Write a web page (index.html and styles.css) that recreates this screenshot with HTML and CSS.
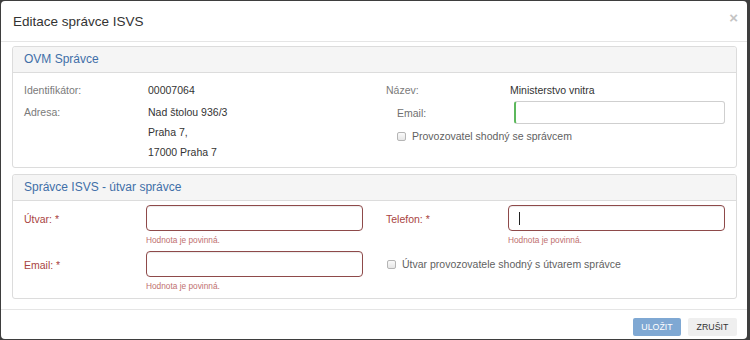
FILE: index.html
```html
<!DOCTYPE html>
<html lang="cs">
<head>
<meta charset="utf-8">
<title>Editace správce ISVS</title>
<link rel="stylesheet" href="styles.css">
</head>
<body>
<div class="modal">
  <div class="modal-header">
    <h4 class="modal-title">Editace správce ISVS</h4>
    <button class="close" type="button">×</button>
  </div>
  <div class="modal-body">
    <div class="panel">
      <div class="panel-heading">OVM Správce</div>
      <div class="panel-body ovm">
        <div class="col">
          <div class="drow"><span class="lbl">Identifikátor:</span><span class="val">00007064</span></div>
          <div class="drow"><span class="lbl">Adresa:</span><div class="val">Nad štolou 936/3<br>Praha 7,<br>17000 Praha 7</div></div>
        </div>
        <div class="col">
          <div class="drow"><span class="lbl">Název:</span><span class="val">Ministerstvo vnitra</span></div>
          <div class="erow"><span class="lbl2">Email:</span><input class="input focus" type="text"></div>
          <label class="check indent"><span class="cb"></span>Provozovatel shodný se správcem</label>
        </div>
      </div>
    </div>
    <div class="panel">
      <div class="panel-heading">Správce ISVS - útvar správce</div>
      <div class="panel-body utvar">
        <div class="col">
          <div class="frow">
            <span class="flbl">Útvar: *</span>
            <div class="fctl"><input class="input err" type="text"><div class="help">Hodnota je povinná.</div></div>
          </div>
          <div class="frow">
            <span class="flbl">Email: *</span>
            <div class="fctl"><input class="input err" type="text"><div class="help">Hodnota je povinná.</div></div>
          </div>
        </div>
        <div class="col">
          <div class="frow">
            <span class="flbl">Telefon: *</span>
            <div class="fctl"><div class="input err caretbox"><span class="caret"></span></div><div class="help">Hodnota je povinná.</div></div>
          </div>
          <label class="check chk2"><span class="cb"></span>Útvar provozovatele shodný s útvarem správce</label>
        </div>
      </div>
    </div>
  </div>
  <div class="modal-footer">
    <button class="btn btn-primary" type="button">ULOŽIT</button>
    <button class="btn btn-default" type="button">ZRUŠIT</button>
  </div>
</div>
</body>
</html>
```

FILE: styles.css
```css
* { box-sizing: border-box; }
html, body { margin: 0; padding: 0; }
body {
  background: #3e3e3e;
  width: 750px;
  height: 340px;
  overflow: hidden;
  padding: 1px 3px 0 1px;
  font-family: "Liberation Sans", Arial, sans-serif;
  font-size: 10.5px;
  color: #333;
}
.modal {
  width: 746px;
  height: 338px;
  background: #fff;
  border-radius: 4px;
  display: flex;
  flex-direction: column;
}
.modal-header {
  position: relative;
  height: 41px;
  padding: 11px 12px;
  border-bottom: 1px solid #e5e5e5;
}
.modal-title {
  margin: 0;
  font-size: 13.5px;
  line-height: 19px;
  font-weight: normal;
  color: #333;
}
.close {
  position: absolute;
  right: 9px;
  top: 9px;
  border: 0;
  background: none;
  padding: 0;
  font-family: "Liberation Sans", Arial, sans-serif;
  font-size: 15px;
  font-weight: bold;
  line-height: 16px;
  color: #c4c4c4;
}
.modal-body {
  padding: 4px 10px 0 11px;
  flex: 1;
  display: flex;
  flex-direction: column;
  gap: 6px;
}
.panel {
  border: 1px solid #dcdcdc;
  border-radius: 3px;
  background: #fff;
}
.panel-heading {
  background: #f5f5f5;
  border-bottom: 1px solid #dcdcdc;
  border-radius: 3px 3px 0 0;
  height: 26px;
  padding: 0 11px;
  line-height: 25px;
  font-size: 12px;
  color: #3f6fa8;
}
.panel-body {
  display: grid;
  grid-template-columns: 1fr 1fr;
  column-gap: 23px;
  padding: 0 11px;
}
.ovm { height: 94px; padding-top: 7px; }
.utvar { height: 97px; padding-top: 4px; }
.drow {
  display: grid;
  grid-template-columns: 124px 1fr;
  line-height: 20px;
  margin-bottom: 2px;
}
.lbl { color: #7a7a7a; }
.val { color: #333; }
.erow {
  display: grid;
  grid-template-columns: 117px 1fr;
  align-items: center;
  padding-left: 11px;
  margin-top: -1px;
}
.lbl2 { color: #6f6f6f; }
.input {
  display: block;
  width: 100%;
  height: 26px;
  border: 1px solid #cfcfcf;
  border-radius: 3px;
  background: #fff;
  margin: 0;
  padding: 0 8px;
  font: inherit;
  outline: none;
}
.input.focus {
  height: 23px;
  border-left: 2px solid #5cb85c;
}
.input.err {
  border: 1.5px solid #8e4a4a;
  border-radius: 4px;
  box-shadow: inset 0 1px 1px rgba(0,0,0,.08);
}
.caretbox { position: relative; }
.caret {
  position: absolute;
  left: 10px;
  top: 6px;
  width: 1px;
  height: 13px;
  background: #222;
}
.check {
  display: flex;
  align-items: center;
  line-height: 20px;
  color: #616161;
}
.check.indent { padding-left: 11px; margin-top: 2px; }
.cb {
  width: 9px;
  height: 9px;
  border: 1px solid #b5b5b5;
  border-radius: 2px;
  background: linear-gradient(#fafafa, #e6e6e6);
  margin-right: 6px;
  flex: none;
}
.chk2 { margin-top: 8px; padding-left: 1px; }
.frow {
  display: grid;
  grid-template-columns: 122px 1fr;
  margin-bottom: 5px;
}
.flbl {
  color: #a94442;
  padding-top: 7px;
  line-height: 14px;
}
.help {
  font-size: 8.3px;
  line-height: 11px;
  margin-top: 4px;
  color: #c0706f;
}
.modal-footer {
  border-top: 1px solid #e5e5e5;
  height: 30px;
  padding: 8px 10px 0 0;
  display: flex;
  justify-content: flex-end;
  gap: 7px;
}
.btn {
  height: 18px;
  border: 0;
  border-radius: 2px;
  padding: 0;
  font-family: "Liberation Sans", Arial, sans-serif;
  font-size: 8.8px;
  line-height: 18px;
}
.btn-primary {
  width: 48px;
  background: #7fa8d3;
  color: #fff;
}
.btn-default {
  width: 49px;
  background: #efefef;
  color: #333;
}
```
